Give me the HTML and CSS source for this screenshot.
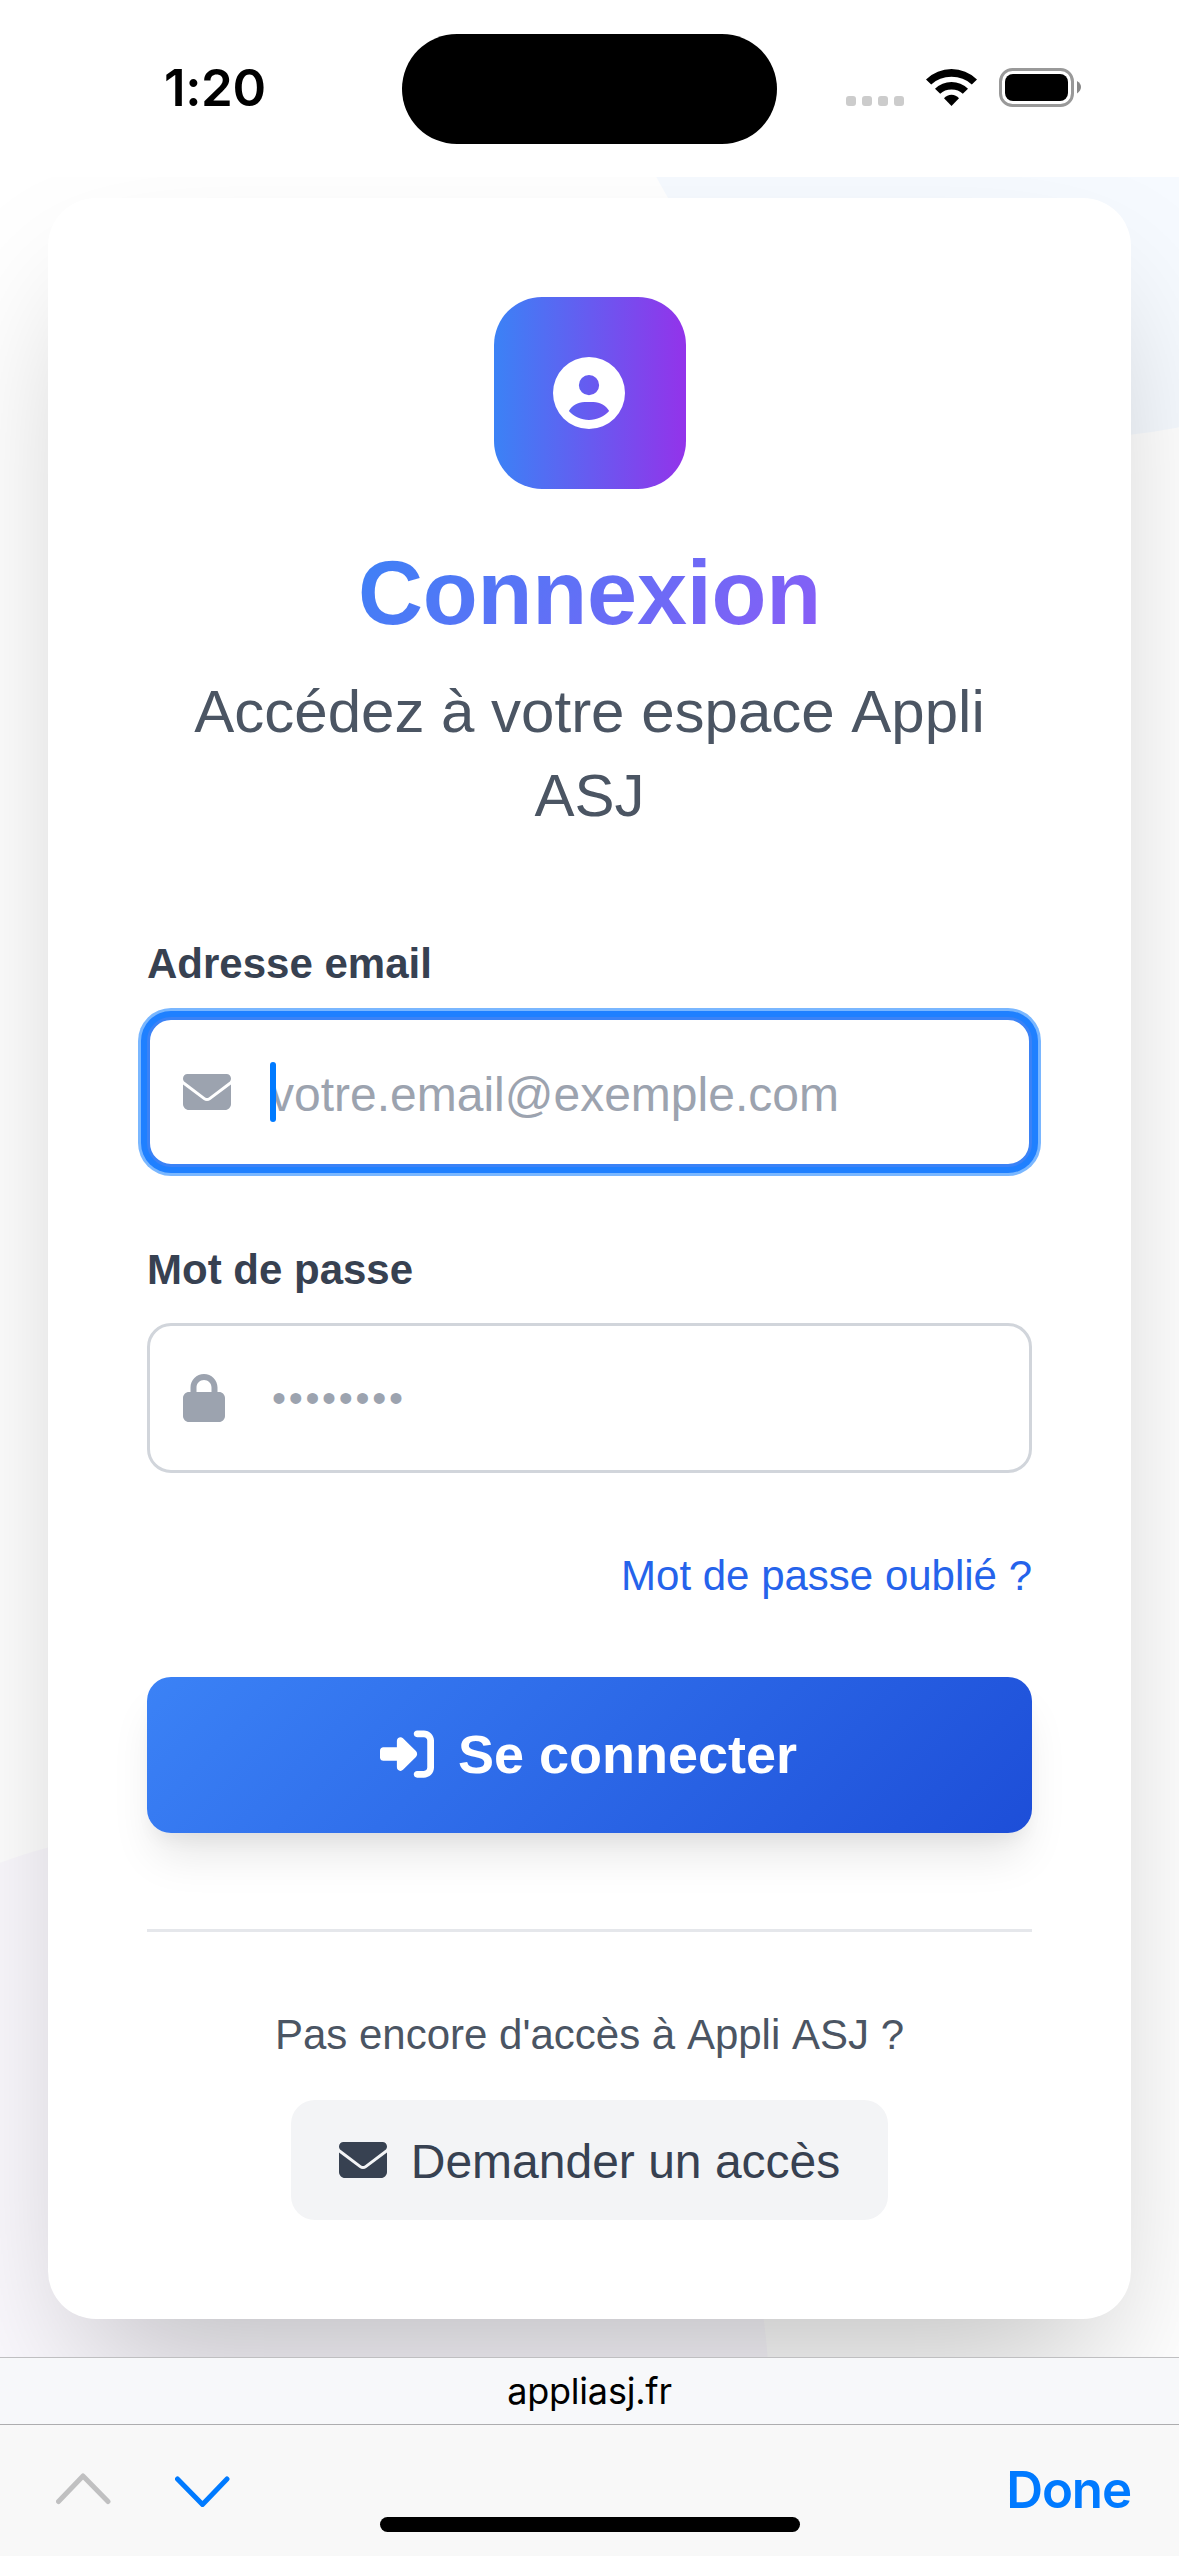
FILE: index.html
```html
<!DOCTYPE html>
<html lang="fr">
<head>
<meta charset="utf-8">
<title>Connexion - Appli ASJ</title>
<link rel="stylesheet" href="styles.css">
</head>
<body>
<header class="status">
  <div class="clock">1:20</div>
  <div class="island"></div>
  <div class="indicators">
    <div class="signal"><i></i><i></i><i></i><i></i></div>
    <svg class="wifi" viewBox="0 0 51 38">
      <path d="M0 11.500Q11 1 25.500 1T51 11.500L45.800 16.500Q37.500 8.800 25.500 8.800T5.200 16.500Z"/>
      <path d="M9 20.800Q16 14 25.500 14T42 20.800L36.800 25.800Q32.500 21.500 25.500 21.500T14.200 25.800Z"/>
      <path d="M18 30.300Q21 26.800 25.500 26.800T33 30.300L25.500 38Z"/>
    </svg>
    <svg class="battery" viewBox="0 0 83 39">
      <rect x="1.500" y="1.500" width="72" height="36" rx="12" fill="none" stroke="#999" stroke-width="3"/>
      <rect x="6" y="6" width="63" height="27" rx="8"/>
      <path d="M78 13Q82 15.500 82 19T78 25.500Z" fill="#888"/>
    </svg>
  </div>
</header>

<main class="page">
  <div class="blob blob-blue"></div>
  <div class="blob blob-violet"></div>
  <section class="card">
    <div class="logo">
      <svg viewBox="0 0 512 512"><path d="M399 384.200C376.900 345.800 335.400 320 288 320H224c-47.400 0-88.900 25.800-111 64.200c35.200 39.200 86.200 63.800 143 63.800s107.800-24.700 143-63.800zM0 256a256 256 0 1 1 512 0A256 256 0 1 1 0 256zm256 16a72 72 0 1 0 0-144 72 72 0 1 0 0 144z"/></svg>
    </div>
    <h1 class="title">Connexion</h1>
    <p class="subtitle">Accédez à votre espace Appli ASJ</p>

    <form class="form">
      <label class="label" for="email">Adresse email</label>
      <div class="field field-focus">
        <svg class="icon-mail" viewBox="0 0 512 512"><path d="M48 64C21.500 64 0 85.500 0 112c0 15.100 7.100 29.300 19.200 38.400L236.800 313.600c11.400 8.500 27 8.500 38.400 0L492.800 150.400c12.100-9.100 19.200-23.300 19.200-38.400c0-26.500-21.500-48-48-48H48zM0 176V384c0 35.300 28.700 64 64 64H448c35.300 0 64-28.700 64-64V176L294.400 339.200c-22.800 17.100-54 17.100-76.800 0L0 176z"/></svg>
        <input class="input" id="email" type="email" placeholder="votre.email@exemple.com">
        <span class="caret"></span>
      </div>
      <label class="label" for="password">Mot de passe</label>
      <div class="field">
        <svg class="icon-lock" viewBox="0 0 448 512"><path d="M144 144v48H304V144c0-44.200-35.800-80-80-80s-80 35.800-80 80zM80 192V144C80 64.500 144.500 0 224 0s144 64.500 144 144v48h16c35.300 0 64 28.700 64 64V448c0 35.300-28.700 64-64 64H64c-35.300 0-64-28.700-64-64V256c0-35.300 28.700-64 64-64H80z"/></svg>
        <input class="input input-dots" id="password" type="password" placeholder="••••••••">
      </div>
      <a class="forgot" href="#">Mot de passe oublié ?</a>
      <button class="submit" type="button">
        <svg viewBox="0 0 512 512"><path d="M217.900 105.900L340.700 228.700c7.200 7.200 11.300 17.100 11.300 27.300s-4.100 20.100-11.300 27.300L217.900 406.100c-6.400 6.400-15 9.900-24 9.900c-18.700 0-33.900-15.200-33.900-33.900l0-62.100L32 320c-17.700 0-32-14.300-32-32l0-64c0-17.700 14.300-32 32-32l128 0 0-62.100c0-18.700 15.200-33.900 33.900-33.900c9 0 17.600 3.600 24 9.900zM352 416l64 0c17.700 0 32-14.300 32-32l0-256c0-17.700-14.300-32-32-32l-64 0c-17.700 0-32-14.300-32-32s14.300-32 32-32l64 0c53 0 96 43 96 96l0 256c0 53-43 96-96 96l-64 0c-17.700 0-32-14.300-32-32s14.300-32 32-32z"/></svg>
        <span>Se connecter</span>
      </button>
    </form>

    <footer class="request">
      <p class="request-text">Pas encore d'accès à Appli ASJ ?</p>
      <a class="request-link" href="#">
        <svg viewBox="0 0 512 512"><path d="M48 64C21.500 64 0 85.500 0 112c0 15.100 7.100 29.300 19.200 38.400L236.800 313.600c11.400 8.500 27 8.500 38.400 0L492.800 150.400c12.100-9.100 19.200-23.300 19.200-38.400c0-26.500-21.500-48-48-48H48zM0 176V384c0 35.300 28.700 64 64 64H448c35.300 0 64-28.700 64-64V176L294.400 339.200c-22.800 17.100-54 17.100-76.800 0L0 176z"/></svg>
        <span>Demander un accès</span>
      </a>
    </footer>
  </section>
</main>

<div class="url">appliasj.fr</div>
<nav class="toolbar">
  <div class="arrows">
    <svg viewBox="0 0 55 34"><path d="M2.500 28.500L27 3L52 28.500" stroke="#c0c0c1"/></svg>
    <svg viewBox="0 0 55 34"><path d="M2.500 6L27.500 31.500L52 6" stroke="#007aff"/></svg>
  </div>
  <span class="done">Done</span>
  <div class="home"></div>
</nav>
</body>
</html>
```
FILE: styles.css
```css
* { box-sizing: border-box; }

body {
  margin: 0;
  width: 1179px;
  height: 2556px;
  overflow: hidden;
  display: flex;
  flex-direction: column;
  background: #fff;
  font-family: "Liberation Sans", Arial, sans-serif;
}

/* Status bar */
.status {
  flex: none;
  height: 177px;
  padding: 34px 98px 0 0;
  display: grid;
  grid-template-columns: 402px 375px 1fr;
}
.clock {
  padding: 23px 0 0 164px;
  font: 600 51px/62px Inter, sans-serif;
  letter-spacing: -0.4px;
  color: #000;
}
.island {
  height: 110px;
  border-radius: 55px;
  background: #000;
}
.indicators {
  display: flex;
  justify-content: flex-end;
  padding-top: 34px;
}
.signal {
  display: flex;
  gap: 6px;
  padding-top: 28px;
  margin-right: 22px;
}
.signal i {
  width: 10px;
  height: 10px;
  border-radius: 3px;
  background: #ccc;
}
.wifi { width: 51px; height: 38px; margin-right: 22px; }
.battery { width: 83px; height: 39px; margin-right: -1px; }

/* Page */
.page {
  flex: none;
  position: relative;
  height: 2180px;
  padding: 21px 48px 0;
  overflow: hidden;
}
.blob { position: absolute; border-radius: 50%; }
.blob-blue {
  left: 603px;
  top: -700px;
  width: 960px;
  height: 960px;
  background: rgba(96, 165, 250, 0.055);
}
.blob-violet {
  left: -371px;
  top: 1650px;
  width: 1140px;
  height: 1140px;
  background: rgba(160, 100, 240, 0.04);
}
.card {
  position: relative;
  height: 2121px;
  padding: 99px;
  display: flex;
  flex-direction: column;
  align-items: center;
  border-radius: 48px;
  background: #fff;
  box-shadow: 0 75px 150px -36px rgba(0, 0, 0, 0.25);
}
.logo {
  width: 192px;
  height: 192px;
  padding-right: 1px;
  display: flex;
  align-items: center;
  justify-content: center;
  border-radius: 48px;
  background: linear-gradient(90deg, #3b82f6, #9333ea);
}
.logo svg { width: 72px; height: 72px; fill: #fff; }
.title {
  margin: 50px 0 0;
  font-size: 90px;
  line-height: 108px;
  font-weight: 700;
  letter-spacing: -0.2px;
  background: linear-gradient(135deg, #3b82f6, #8b5cf6);
  -webkit-background-clip: text;
  background-clip: text;
  color: transparent;
}
.subtitle {
  margin: 23px 0 0;
  font-size: 60px;
  line-height: 84px;
  font-kerning: none;
  text-align: center;
  color: #4b5563;
}

/* Form */
.form {
  width: 100%;
  margin-top: 96px;
  display: flex;
  flex-direction: column;
}
.label {
  margin-bottom: 23px;
  font-size: 42px;
  line-height: 60px;
  font-weight: 700;
  color: #374151;
}
.field {
  position: relative;
  height: 150px;
  margin-bottom: 73px;
  padding-left: 33px;
  display: flex;
  align-items: center;
  border: 3px solid #d1d5db;
  border-radius: 24px;
  background: #fff;
}
.field-focus {
  border-color: #3b82f6;
  box-shadow: 0 0 0 6px #1f80ff, 0 0 0 9px #7ab7ff;
}
.field svg { flex: none; fill: #9ca3af; }
.icon-mail { width: 48px; height: 48px; margin-right: 39px; }
.icon-lock { width: 42px; height: 48px; margin-right: 45px; }
.input {
  flex: 1;
  min-width: 0;
  height: 76px;
  padding: 4px 0 0;
  border: 0;
  outline: 0;
  background: none;
  font: 48px/72px "Liberation Sans", Arial, sans-serif;
  color: #111827;
}
.input::placeholder { color: #9ca3af; opacity: 1; }
/* smaller bullets on the same advance */
.input-dots {
  padding: 0 0 0 2px;
  font-size: 40px;
  letter-spacing: 2.700px;
}
.caret {
  position: absolute;
  left: 120px;
  top: 42px;
  width: 6px;
  height: 60px;
  border-radius: 3px;
  background: #007aff;
}
.forgot {
  align-self: flex-end;
  font-size: 42px;
  line-height: 60px;
  color: #2563eb;
  text-decoration: none;
}
.submit {
  height: 156px;
  margin: 71px 0 0;
  padding: 0 2px 2px 0;
  display: flex;
  align-items: center;
  justify-content: center;
  gap: 24px;
  border: 0;
  border-radius: 24px;
  background: linear-gradient(135deg, #3b82f6, #1d4ed8);
  box-shadow: 0 30px 45px -9px rgba(0, 0, 0, 0.1), 0 12px 18px -6px rgba(0, 0, 0, 0.05);
  font: 700 54px/84px "Liberation Sans", Arial, sans-serif;
  color: #fff;
}
.submit svg { width: 54px; height: 54px; fill: #fff; }

/* Access request */
.request {
  width: 100%;
  margin-top: 96px;
  padding-top: 73px;
  display: flex;
  flex-direction: column;
  align-items: center;
  gap: 35px;
  border-top: 3px solid #e5e7eb;
}
.request-text {
  margin: 0;
  font-size: 42px;
  line-height: 60px;
  font-kerning: none;
  color: #4b5563;
}
.request-link {
  height: 120px;
  padding: 0 48px;
  display: flex;
  align-items: center;
  gap: 24px;
  border-radius: 24px;
  background: #f3f4f6;
  font-size: 48px;
  line-height: 72px;
  color: #374151;
  text-decoration: none;
}
.request-link svg { width: 48px; height: 48px; fill: #374151; }
.request-link span { padding-top: 3px; }

/* Browser chrome */
.url {
  flex: none;
  height: 67px;
  border-top: 1px solid #bfbfc1;
  background: #f7f8fa;
  font: 36px/66px Inter, sans-serif;
  letter-spacing: -0.200px;
  text-align: center;
  color: #000;
}
.toolbar {
  flex: none;
  position: relative;
  height: 132px;
  padding: 0 48px 0 56px;
  display: flex;
  justify-content: space-between;
  align-items: flex-start;
  border-top: 1px solid #adadaf;
  background: #f8f8f8;
}
.arrows { display: flex; gap: 64px; padding-top: 48px; }
.arrows svg {
  width: 55px;
  height: 34px;
  fill: none;
  stroke-width: 5;
  stroke-linecap: round;
  stroke-linejoin: round;
}
.done {
  padding-top: 35px;
  font: 600 51px/60px Inter, sans-serif;
  letter-spacing: -1.100px;
  color: #007aff;
}
.home {
  position: absolute;
  left: 380px;
  top: 92px;
  width: 420px;
  height: 15px;
  border-radius: 8px;
  background: #000;
}
```
